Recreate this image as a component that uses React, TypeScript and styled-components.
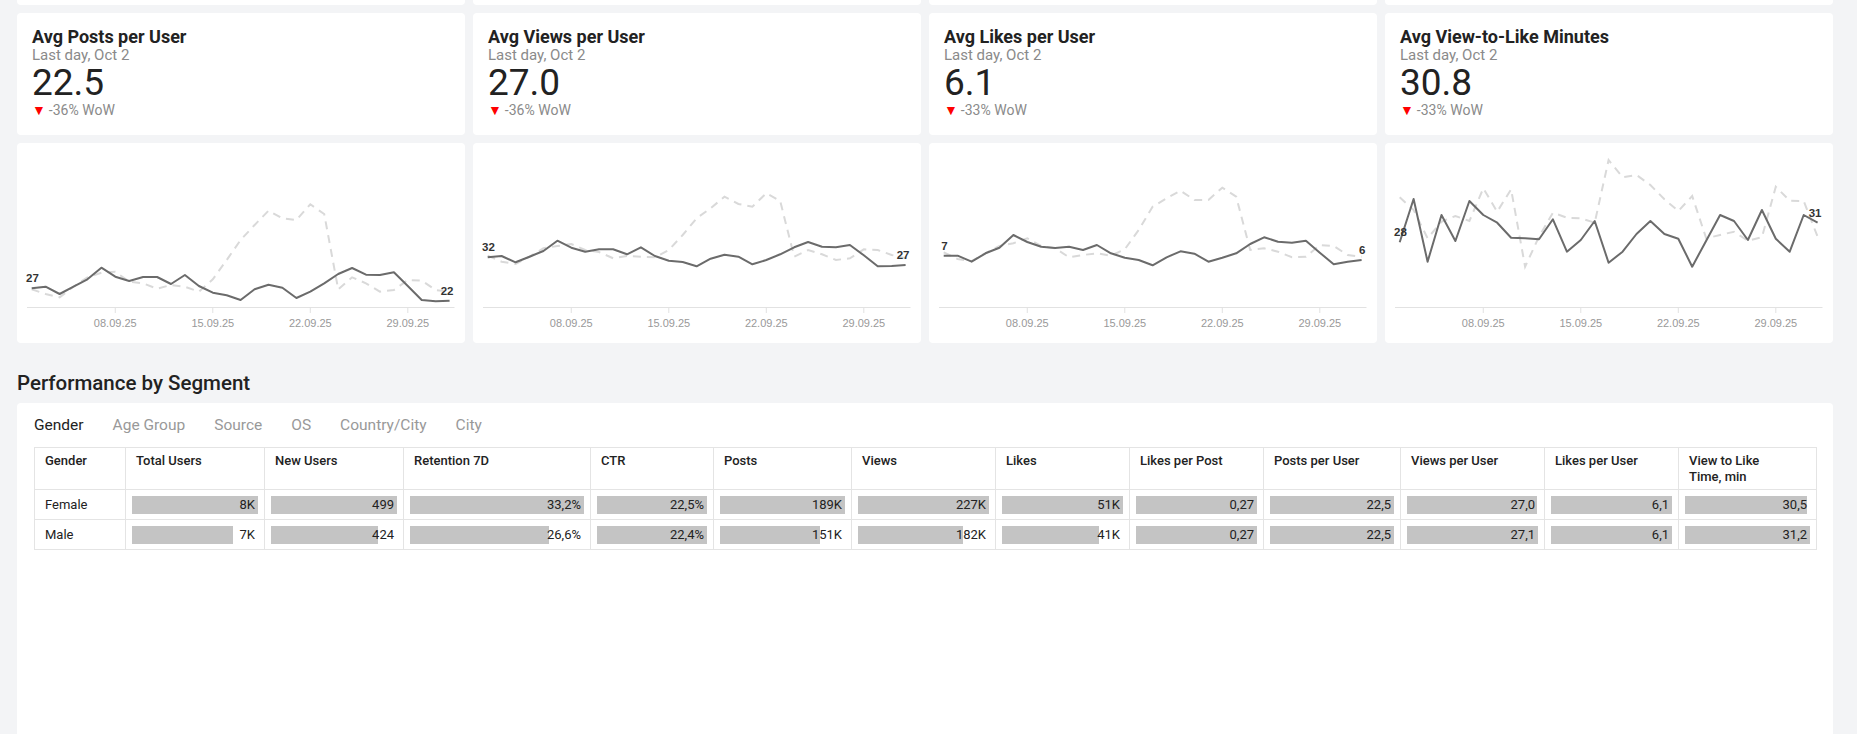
import React from 'react';
import styled, { createGlobalStyle } from 'styled-components';

const GlobalStyle = createGlobalStyle`
  body {
    margin: 0;
    background: #f3f4f6;
    font-family: Roboto, 'Liberation Sans', sans-serif;
    color: #222;
  }
`;

const Page = styled.div`
  display: flex;
  flex-direction: column;
  padding: 0 24px 0 17px;
`;

const CardGrid = styled.div<{ $top?: number }>`
  display: grid;
  grid-template-columns: repeat(4, 1fr);
  gap: 8px;
  margin-top: ${({ $top }) => $top ?? 8}px;
`;

const StubCard = styled.div`
  height: 5px;
  background: #fff;
  border-radius: 0 0 4px 4px;
`;

const KpiCard = styled.div`
  box-sizing: border-box;
  height: 122px;
  padding: 14px 15px 0;
  background: #fff;
  border-radius: 4px;
`;

const KpiTitle = styled.div`
  font-size: 18px;
  line-height: 20px;
  font-weight: 700;
  color: #222;
`;

const KpiSubtitle = styled.div`
  font-size: 15px;
  line-height: 17px;
  color: #8a8a8a;
`;

const KpiValue = styled.div`
  font-size: 37px;
  line-height: 38px;
  color: #222;
`;

const KpiDelta = styled.div`
  display: flex;
  align-items: center;
  gap: 3px;
  font-size: 14px;
  line-height: 16px;
  color: #8a8a8a;
`;

const DownArrow = styled.span`
  color: #f00;
  font-size: 14px;
  line-height: 16px;
`;

const ChartCard = styled.div`
  height: 200px;
  background: #fff;
  border-radius: 4px;
  overflow: hidden;
`;

const SectionTitle = styled.h2`
  margin: 28px 0 8px;
  font-size: 20.5px;
  line-height: 24px;
  font-weight: 500;
  color: #222;
`;

const Panel = styled.div`
  box-sizing: border-box;
  height: 331px;
  padding: 12px 17px 0;
  background: #fff;
  border-radius: 4px 4px 0 0;
`;

const Tabs = styled.div`
  display: flex;
  gap: 29px;
  margin-bottom: 12px;
`;

const Tab = styled.span<{ $active?: boolean }>`
  font-size: 15.5px;
  line-height: 20px;
  color: ${({ $active }) => ($active ? '#222' : '#999')};
  cursor: pointer;
`;

const Table = styled.table`
  width: 1782px;
  table-layout: fixed;
  border-collapse: collapse;
  font-size: 13px;
  color: #222;
`;

const HeadCell = styled.th`
  padding: 5px 10px 4px;
  height: 32px;
  vertical-align: top;
  text-align: left;
  white-space: pre-line;
  font-weight: 500;
  font-size: 13px;
  line-height: 16px;
  border: 1px solid #e4e4e4;
`;

const Cell = styled.td`
  padding: 0 10px;
  height: 29px;
  border: 1px solid #e4e4e4;
  white-space: nowrap;
`;

const BarCell = styled.td`
  padding: 0 6px;
  height: 29px;
  border: 1px solid #e4e4e4;
`;

const BarBox = styled.div`
  position: relative;
  height: 18px;
`;

const BarFill = styled.div`
  position: absolute;
  left: 0;
  top: 0;
  bottom: 0;
  background: #c4c4c4;
`;

const BarValue = styled.div`
  position: relative;
  padding-right: 3px;
  text-align: right;
  line-height: 18px;
`;

type Kpi = { title: string; value: string; delta: string };

const kpis: Kpi[] = [
  { title: 'Avg Posts per User', value: '22.5', delta: '-36% WoW' },
  { title: 'Avg Views per User', value: '27.0', delta: '-36% WoW' },
  { title: 'Avg Likes per User', value: '6.1', delta: '-33% WoW' },
  { title: 'Avg View-to-Like Minutes', value: '30.8', delta: '-33% WoW' },
];

type Series = { current: number[]; previous: number[]; first: string; last: string };

const charts: Series[] = [
  {
    current: [145.3, 143.7, 151, 143.7, 136.3, 124.7, 133.7, 138, 134, 134, 141, 132, 143, 149.7, 152.3, 157, 146.3, 141.7, 144.7, 155, 148.7, 140.3, 131, 125, 131.7, 132, 129.3, 143, 157, 158.3, 157.7],
    previous: [146.3, 151, 154.3, 143.7, 134.3, 129.7, 128.7, 138.7, 140.3, 145.7, 142, 143.7, 148.7, 136.3, 117, 97, 82, 67.7, 75.3, 77, 61.3, 71, 146.3, 134.3, 140.3, 148.7, 147, 137, 137.7, 147, 148.7],
    first: '27',
    last: '22',
  },
  {
    current: [114.3, 113, 119.3, 113.7, 108, 97.7, 104.7, 108.7, 106.3, 106.3, 111.3, 104.3, 113, 117.7, 119, 123.3, 115.7, 111.7, 113.7, 121.3, 117, 111.3, 104.3, 99, 103.7, 104.3, 102, 112.3, 123.3, 123, 122],
    previous: [112.7, 118.7, 121, 113.7, 105.3, 103, 101, 107, 109, 115.3, 113, 113.7, 114.3, 107, 92, 75.3, 65.3, 53.7, 61, 63.7, 50.3, 58, 113.7, 107, 111.3, 117, 115.3, 106.3, 107, 112, 115.3],
    first: '32',
    last: '27',
  },
  {
    current: [112.7, 112.7, 118.7, 110.3, 104.7, 92, 99, 103.7, 105, 103.7, 107, 102, 110.3, 114.7, 117, 122.3, 114.3, 108.3, 110.7, 118.7, 114.7, 110.3, 101, 94.3, 98.7, 99.7, 97.7, 109.7, 121.3, 118.7, 117],
    previous: [109.3, 116, 118, 110.3, 103, 100.3, 95.3, 103, 105.3, 114.3, 112, 110.3, 112.7, 106.3, 87, 63.7, 55.3, 47.7, 57, 57, 44.7, 53.7, 107, 105.3, 108.7, 114.3, 113.7, 102, 103, 112, 113.7],
    first: '7',
    last: '6',
  },
  {
    current: [99.3, 56, 118.7, 72, 98, 58, 72, 79.7, 94.7, 95.3, 96.3, 76.3, 108.7, 97, 78, 119.7, 108.7, 91, 78, 91, 95.7, 123.7, 97.7, 72, 78, 97, 67, 95.7, 108.7, 72, 79.7],
    previous: [54.3, 67, 95.3, 78.7, 73, 78, 45.3, 68.7, 46.3, 123.7, 93.7, 69.7, 74.7, 75.3, 79.7, 17, 34.3, 32, 42, 56.3, 68, 53, 95.3, 92, 88.7, 97.7, 94.3, 43.7, 57.7, 58, 93.7],
    first: '28',
    last: '31',
  },
];

const ticks = [
  { day: 6, label: '08.09.25' },
  { day: 13, label: '15.09.25' },
  { day: 20, label: '22.09.25' },
  { day: 27, label: '29.09.25' },
];

const xAt = (i: number) => 14.7 + i * 13.93;
const toPath = (ys: number[]) => ys.map((y, i) => `${i ? 'L' : 'M'}${xAt(i).toFixed(1)} ${y}`).join(' ');

const LineChart: React.FC<{ data: Series }> = ({ data }) => {
  const lastY = data.current[data.current.length - 1];
  return (
    <svg width="448" height="200" style={{ display: 'block' }}>
      <line x1="10" x2="437.5" y1="164.5" y2="164.5" stroke="#e2e2e2" />
      {ticks.map((t) => (
        <g key={t.label}>
          <line x1={xAt(t.day)} x2={xAt(t.day)} y1="164.5" y2="170" stroke="#e2e2e2" />
          <text
            x={xAt(t.day)}
            y="183.5"
            textAnchor="middle"
            fontSize="11"
            fill="#999"
            fontFamily="'Liberation Sans', Arial, sans-serif"
          >
            {t.label}
          </text>
        </g>
      ))}
      <path d={toPath(data.previous)} fill="none" stroke="#d9d9d9" strokeWidth="2" strokeDasharray="8 6" />
      <path d={toPath(data.current)} fill="none" stroke="#6b6b6b" strokeWidth="2" strokeLinejoin="round" />
      <g fontSize="11.5" fontWeight="700" fill="#333" fontFamily="'Liberation Sans', Arial, sans-serif">
        <text x="15.5" y={data.current[0] - 6} textAnchor="middle">{data.first}</text>
        <text x="436.5" y={lastY - 6} textAnchor="end">{data.last}</text>
      </g>
    </svg>
  );
};

type Row = { label: string; values: number[] };

const columns = [
  'Total Users', 'New Users', 'Retention 7D', 'CTR', 'Posts', 'Views', 'Likes',
  'Likes per Post', 'Posts per User', 'Views per User', 'Likes per User', 'View to Like\nTime, min',
];
const widths = [91, 139, 139, 187, 123, 138, 144, 134, 134, 137, 144, 134, 138];

const rows: Row[] = [
  { label: 'Female', values: [8, 499, 33.2, 22.5, 189, 227, 51, 0.27, 22.5, 27.0, 6.1, 30.5] },
  { label: 'Male', values: [7, 424, 26.6, 22.4, 151, 182, 41, 0.27, 22.5, 27.1, 6.1, 31.2] },
];
// bar lengths relative to the biggest value in the column
const ratios = [
  [1, 0.805],
  [1, 0.85],
  [1, 0.8],
  [1, 0.996],
  [1, 0.8],
  [1, 0.8],
  [1, 0.8],
  [1, 1],
  [1, 1],
  [0.996, 1],
  [1, 1],
  [0.978, 1],
];

const fmt = (col: number, v: number) => {
  if (col === 0 || (col >= 4 && col <= 6)) return `${v}K`;
  if (col === 1) return String(v);
  if (col === 2 || col === 3) return `${v.toFixed(1).replace('.', ',')}%`;
  if (col === 7) return v.toFixed(2).replace('.', ',');
  return v.toFixed(1).replace('.', ',');
};

const tabs = ['Gender', 'Age Group', 'Source', 'OS', 'Country/City', 'City'];

const App: React.FC = () => (
  <>
    <GlobalStyle />
    <Page>
      <CardGrid $top={0}>
        {kpis.map((k) => <StubCard key={k.title} />)}
      </CardGrid>
      <CardGrid>
        {kpis.map((k) => (
          <KpiCard key={k.title}>
            <KpiTitle>{k.title}</KpiTitle>
            <KpiSubtitle>Last day, Oct 2</KpiSubtitle>
            <KpiValue>{k.value}</KpiValue>
            <KpiDelta>
              <DownArrow>▼</DownArrow>
              {k.delta}
            </KpiDelta>
          </KpiCard>
        ))}
      </CardGrid>
      <CardGrid>
        {charts.map((c) => (
          <ChartCard key={c.first + c.last}>
            <LineChart data={c} />
          </ChartCard>
        ))}
      </CardGrid>
      <SectionTitle>Performance by Segment</SectionTitle>
      <Panel>
        <Tabs>
          {tabs.map((t, i) => <Tab key={t} $active={i === 0}>{t}</Tab>)}
        </Tabs>
        <Table>
          <colgroup>
            {widths.map((w, i) => <col key={i} style={{ width: w }} />)}
          </colgroup>
          <thead>
            <tr>
              <HeadCell>Gender</HeadCell>
              {columns.map((c) => <HeadCell key={c}>{c}</HeadCell>)}
            </tr>
          </thead>
          <tbody>
            {rows.map((r, ri) => (
              <tr key={r.label}>
                <Cell>{r.label}</Cell>
                {r.values.map((v, ci) => (
                  <BarCell key={ci}>
                    <BarBox>
                      <BarFill style={{ width: `${ratios[ci][ri] * 100}%` }} />
                      <BarValue>{fmt(ci, v)}</BarValue>
                    </BarBox>
                  </BarCell>
                ))}
              </tr>
            ))}
          </tbody>
        </Table>
      </Panel>
    </Page>
  </>
);

export default App;
